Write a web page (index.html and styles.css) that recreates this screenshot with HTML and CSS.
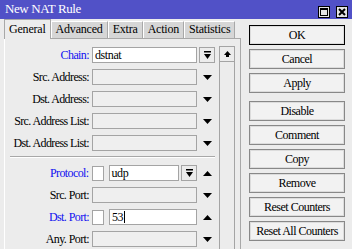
FILE: index.html
```html
<!DOCTYPE html>
<html lang="en">
<head>
  <meta charset="UTF-8">
  <title>New NAT Rule</title>
  <link rel="stylesheet" href="styles.css">
</head>
<body>

  <div class="window">
    <div class="titlebar">
      <span class="title">New NAT Rule</span>
      <span class="tb-btns">
        <span class="tb-btn">
          <svg width="8" height="8" viewBox="0 0 8 8"><rect x="0.5" y="0.5" width="7" height="7" fill="none" stroke="#000"/><rect x="0" y="0" width="8" height="2"/></svg>
        </span>
        <span class="tb-btn">
          <svg width="8" height="8" viewBox="0 0 8 8"><path d="M1 1L7 7M7 1L1 7" stroke="#000" stroke-width="2"/></svg>
        </span>
      </span>
    </div>

    <div class="main">
      <div class="left">
        <div class="tabs">
          <div class="tab active">General</div>
          <div class="tab">Advanced</div>
          <div class="tab">Extra</div>
          <div class="tab">Action</div>
          <div class="tab">Statistics</div>
        </div>

        <div class="panel">
          <div class="fields">
            <div class="row">
              <label class="label blue">Chain:</label>
              <div class="input white">dstnat</div>
              <div class="drop"><svg width="9" height="9" viewBox="0 0 9 9"><rect x="1" y="0" width="7" height="1.5"/><path d="M1 3h7l-3.5 5z"/></svg></div>
            </div>
            <div class="row">
              <label class="label">Src. Address:</label>
              <div class="input"></div>
              <div class="arrow"><svg width="9" height="5" viewBox="0 0 9 5"><path d="M0 0h9L4.5 5z"/></svg></div>
            </div>
            <div class="row">
              <label class="label">Dst. Address:</label>
              <div class="input"></div>
              <div class="arrow"><svg width="9" height="5" viewBox="0 0 9 5"><path d="M0 0h9L4.5 5z"/></svg></div>
            </div>
            <div class="row">
              <label class="label">Src. Address List:</label>
              <div class="input"></div>
              <div class="arrow"><svg width="9" height="5" viewBox="0 0 9 5"><path d="M0 0h9L4.5 5z"/></svg></div>
            </div>
            <div class="row">
              <label class="label">Dst. Address List:</label>
              <div class="input"></div>
              <div class="arrow"><svg width="9" height="5" viewBox="0 0 9 5"><path d="M0 0h9L4.5 5z"/></svg></div>
            </div>

            <div class="separator"></div>

            <div class="row">
              <label class="label blue">Protocol:</label>
              <div class="check"></div>
              <div class="input white short">udp</div>
              <div class="drop"><svg width="9" height="9" viewBox="0 0 9 9"><rect x="1" y="0" width="7" height="1.5"/><path d="M1 3h7l-3.5 5z"/></svg></div>
              <div class="arrow"><svg width="9" height="5" viewBox="0 0 9 5"><path d="M0 5h9L4.5 0z"/></svg></div>
            </div>
            <div class="row">
              <label class="label">Src. Port:</label>
              <div class="input"></div>
              <div class="arrow"><svg width="9" height="5" viewBox="0 0 9 5"><path d="M0 0h9L4.5 5z"/></svg></div>
            </div>
            <div class="row">
              <label class="label blue">Dst. Port:</label>
              <div class="check"></div>
              <div class="input white mid">53<span class="caret"></span></div>
              <div class="arrow"><svg width="9" height="5" viewBox="0 0 9 5"><path d="M0 5h9L4.5 0z"/></svg></div>
            </div>
            <div class="row">
              <label class="label">Any. Port:</label>
              <div class="input"></div>
              <div class="arrow"><svg width="9" height="5" viewBox="0 0 9 5"><path d="M0 0h9L4.5 5z"/></svg></div>
            </div>
          </div>

          <div class="scroll">
            <div class="scroll-up"><svg width="7" height="7" viewBox="0 0 7 7"><path d="M3.5 0L7 4H5v2H2V4H0z"/></svg></div>
            <div class="scroll-track"></div>
          </div>
        </div>
      </div>

      <div class="actions">
        <div class="btn default">OK</div>
        <div class="btn">Cancel</div>
        <div class="btn">Apply</div>
        <div class="btn spaced">Disable</div>
        <div class="btn">Comment</div>
        <div class="btn">Copy</div>
        <div class="btn">Remove</div>
        <div class="btn">Reset Counters</div>
        <div class="btn">Reset All Counters</div>
      </div>
    </div>
  </div>

</body>
</html>
```

FILE: styles.css
```css
body {
  margin: 0;
  font-family: "Liberation Serif", "Times New Roman", serif;
  font-size: 12px;
  color: #000;
}

.window {
  width: 352px;
  height: 249px;
  background-color: #ececec;
  overflow: hidden;
}

.titlebar {
  height: 19px;
  box-sizing: border-box;
  background-color: #5151c7;
  color: #fff;
  display: flex;
  justify-content: space-between;
  align-items: flex-end;
  padding: 0 4px 1px 5px;
}

.title {
  font-size: 13px;
  letter-spacing: -0.4px;
  padding-bottom: 1px;
}

.tb-btns {
  display: flex;
  gap: 6px;
}

.tb-btn {
  width: 12px;
  height: 12px;
  box-sizing: border-box;
  background-color: #e4e4e4;
  border: 1px solid #000;
  display: flex;
  align-items: center;
  justify-content: center;
}

.main {
  display: flex;
  height: 230px;
}

.left {
  width: 241px;
  display: flex;
  flex-direction: column;
}

/* tabs */
.tabs {
  height: 21px;
  display: flex;
  align-items: flex-end;
  padding-left: 4px;
}

.tab {
  height: 16px;
  line-height: 15px;
  padding: 0 4px;
  background-color: #d6d6d6;
  border-top: 1px solid #fff;
  border-left: 1px solid #fff;
  border-right: 1px solid #a8a8a8;
  letter-spacing: -0.2px;
}

.tab.active {
  height: 19px;
  line-height: 18px;
  background-color: #ececec;
  border-left: 1px solid #a8a8a8;
  border-top: 1px solid #a8a8a8;
  margin-bottom: -1px;
  position: relative;
  z-index: 1;
}

/* panel */
.panel {
  flex: 1;
  margin-left: 4px;
  display: flex;
  border-top: 1px solid #a8a8a8;
  border-left: 1px solid #fff;
  border-right: 1px solid #a8a8a8;
  padding-top: 5px;
}

.fields {
  width: 210px;
}

.row {
  height: 22px;
  display: flex;
  align-items: center;
}

.label {
  width: 84px;
  text-align: right;
  letter-spacing: -0.6px;
  white-space: nowrap;
}

.label.blue {
  color: #1010f0;
}

.input {
  width: 105px;
  height: 16px;
  box-sizing: border-box;
  margin-left: 3px;
  border: 1px solid #a4a4a4;
  background-color: #efefef;
  padding-left: 2px;
  line-height: 14px;
  letter-spacing: -0.4px;
}

.input.white {
  background-color: #fff;
}

.input.short {
  width: 71px;
  margin-left: 5px;
}

.input.mid {
  width: 88px;
  margin-left: 5px;
}

.caret {
  display: inline-block;
  width: 1px;
  height: 12px;
  margin-left: 1px;
  background-color: #000;
  vertical-align: -2px;
}

.check {
  width: 12px;
  height: 15px;
  box-sizing: border-box;
  margin-left: 3px;
  border: 1px solid #a4a4a4;
  background-color: #fff;
}

.drop {
  width: 16px;
  height: 16px;
  box-sizing: border-box;
  margin-left: 2px;
  border: 1px solid #a4a4a4;
  background-color: #ececec;
  display: flex;
  align-items: center;
  justify-content: center;
}

.arrow {
  width: 16px;
  margin-left: 2px;
  display: flex;
  justify-content: center;
}

.separator {
  margin: 2px 0 4px 5px;
  width: 205px;
  border-top: 1px solid #a8a8a8;
  border-bottom: 1px solid #fff;
}

.scroll {
  width: 16px;
  margin-left: 4px;
  margin-top: 2px;
  display: flex;
  flex-direction: column;
}

.scroll-up {
  height: 16px;
  box-sizing: border-box;
  border: 1px solid #a4a4a4;
  background-color: #ececec;
  display: flex;
  align-items: center;
  justify-content: center;
}

.scroll-track {
  flex: 1;
  border-left: 1px solid #a4a4a4;
  border-right: 1px solid #a4a4a4;
}

/* buttons */
.actions {
  padding: 6px 0 0 8px;
  display: flex;
  flex-direction: column;
  gap: 4px;
}

.btn {
  width: 96px;
  height: 20px;
  box-sizing: border-box;
  border: 1px solid #888;
  box-shadow: inset 0 0 0 1px #dcdcdc;
  background-color: #f2f2f2;
  text-align: center;
  line-height: 18px;
  letter-spacing: -0.5px;
}

.btn.default {
  border-color: #000;
}

.btn.spaced {
  margin-top: 4px;
}
```
